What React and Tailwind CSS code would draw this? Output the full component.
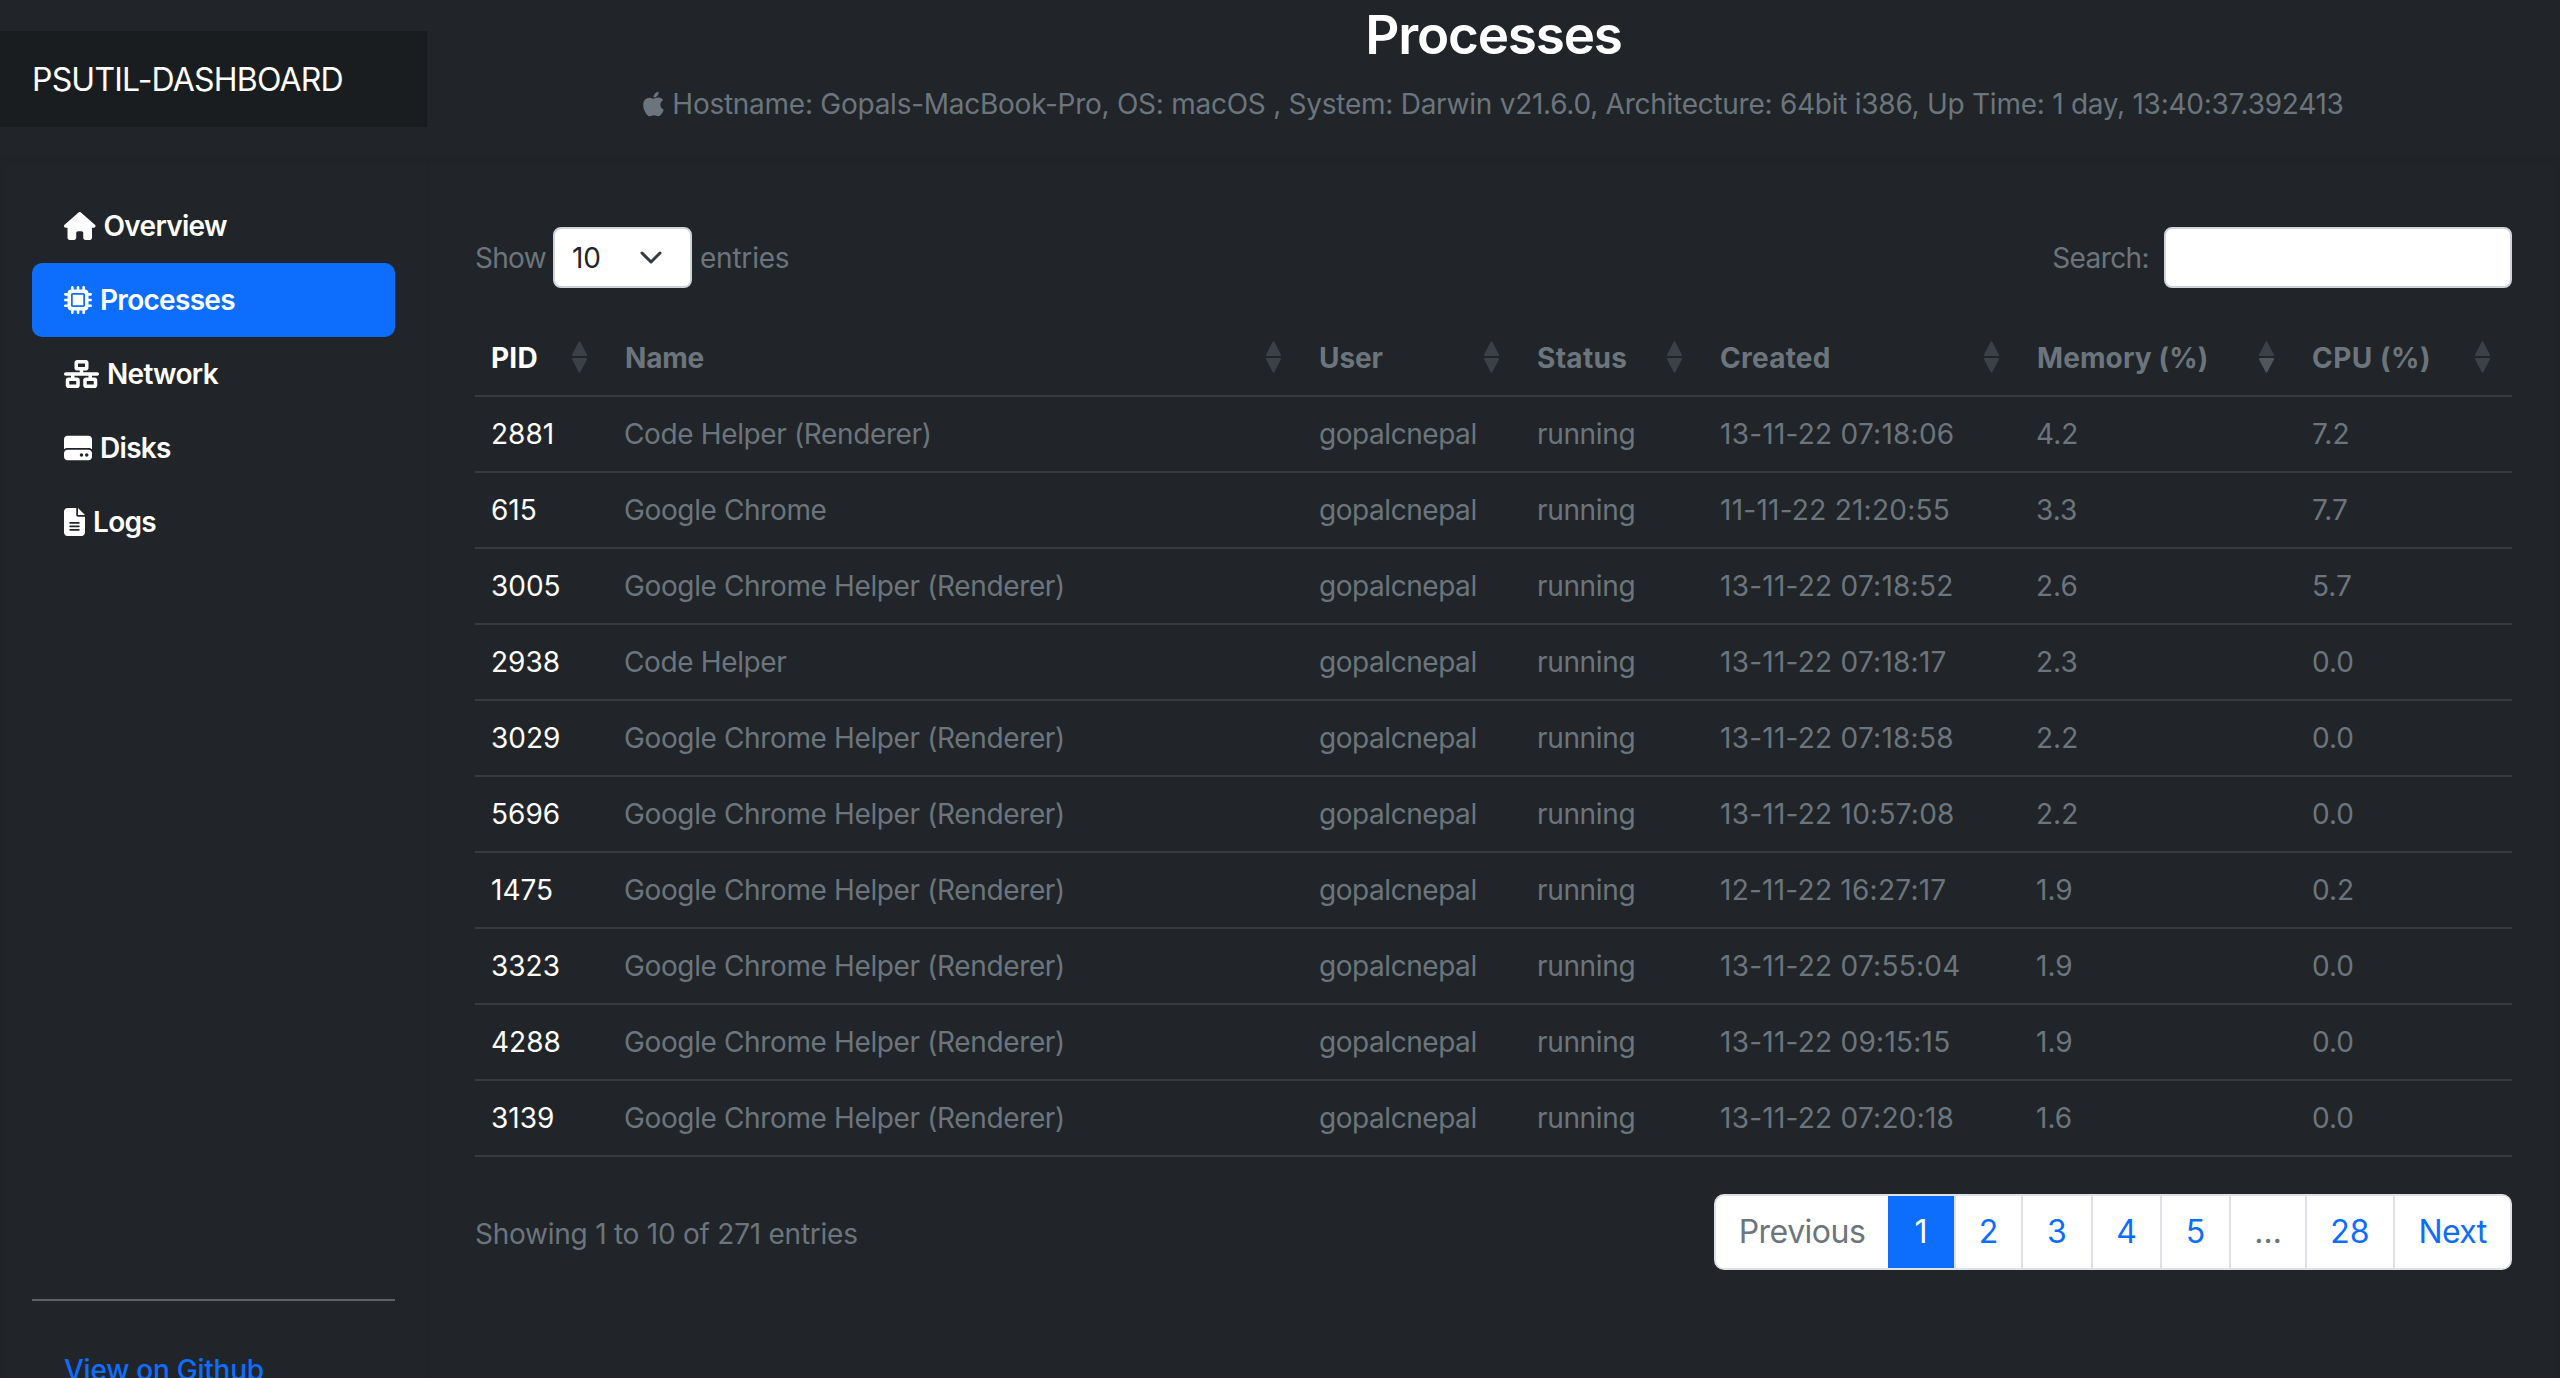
import React from "react";
import { FaHouse, FaMicrochip, FaNetworkWired, FaHardDrive, FaFileLines, FaApple } from "react-icons/fa6";

const rows = [
  ["2881","Code Helper (Renderer)","13-11-22 07:18:06","4.2","7.2"],
  ["615","Google Chrome","11-11-22 21:20:55","3.3","7.7"],
  ["3005","Google Chrome Helper (Renderer)","13-11-22 07:18:52","2.6","5.7"],
  ["2938","Code Helper","13-11-22 07:18:17","2.3","0.0"],
  ["3029","Google Chrome Helper (Renderer)","13-11-22 07:18:58","2.2","0.0"],
  ["5696","Google Chrome Helper (Renderer)","13-11-22 10:57:08","2.2","0.0"],
  ["1475","Google Chrome Helper (Renderer)","12-11-22 16:27:17","1.9","0.2"],
  ["3323","Google Chrome Helper (Renderer)","13-11-22 07:55:04","1.9","0.0"],
  ["4288","Google Chrome Helper (Renderer)","13-11-22 09:15:15","1.9","0.0"],
  ["3139","Google Chrome Helper (Renderer)","13-11-22 07:20:18","1.6","0.0"],
];

const nav = [
  ["Overview", FaHouse, false, "w-[31.5px]"],
  ["Processes", FaMicrochip, true, "w-[28px]"],
  ["Network", FaNetworkWired, false, "w-[35px]"],
  ["Disks", FaHardDrive, false, "w-[28px]"],
  ["Logs", FaFileLines, false, "w-[21px]"],
];

const heads = [
  ["PID","w-[134px] tracking-[0.2px]","text-white",false],
  ["Name","w-[694px] tracking-[-0.2px]","text-[#6c757d]",false],
  ["User","w-[218px] tracking-[-0.1px]","text-[#6c757d]",false],
  ["Status","w-[183px] tracking-[0.3px]","text-[#6c757d]",false],
  ["Created","w-[317px] tracking-[0.25px]","text-[#6c757d]",false],
  ["Memory (%)","w-[275px] tracking-[0.1px]","text-[#6c757d]",true],
  ["CPU (%)","w-[216px] tracking-[0.5px]","text-[#6c757d]",false],
];

function Sort({ down }) {
  return (
    <svg width="15" height="32" viewBox="0 0 15 32" className="absolute right-[22px] top-1/2 -translate-y-1/2">
      <path d="M7.5 1.5 L14 14 H1 Z" fill="#3c4147" stroke="#3c4147" strokeWidth="2" strokeLinejoin="round" />
      <path d="M7.5 30.5 L14 18 H1 Z" fill={down ? "#50565c" : "#3c4147"} stroke={down ? "#50565c" : "#3c4147"} strokeWidth="2" strokeLinejoin="round" />
    </svg>
  );
}

const pages = [
  ["Previous","w-[172px] tracking-[-0.5px]","text-[#6c757d] bg-white"],
  ["1","w-[66px]","text-white bg-[#0d6efd]"],
  ["2","w-[67px]","text-[#0d6efd] bg-white"],
  ["3","w-[70px]","text-[#0d6efd] bg-white"],
  ["4","w-[69px]","text-[#0d6efd] bg-white"],
  ["5","w-[69px]","text-[#0d6efd] bg-white"],
  ["…","w-[76px]","text-[#6c757d] bg-white"],
  ["28","w-[88px]","text-[#0d6efd] bg-white"],
  ["Next","w-[117px] tracking-[-0.6px]","text-[#0d6efd] bg-white"],
];

export default function App() {
  return (
    <div className="h-[1378px] overflow-hidden bg-[#212529] flex flex-col font-['Inter',sans-serif] text-[28px] text-[#6c757d]">
      <header className="h-[157px] shrink-0 flex">
        <div className="w-[427px] shrink-0 pt-[31px]">
          <div className="h-[96px] bg-[#1a1d20] border-r-2 border-[#17191c] flex items-center pl-[32px] pt-[2px] text-[32px] tracking-[-0.8px] text-white">PSUTIL-DASHBOARD</div>
        </div>
        <div className="flex-1 flex flex-col items-center">
          <h1 className="text-[53px] leading-[70px] font-semibold tracking-[-1.2px] text-white">Processes</h1>
          <p className="mt-[15px] leading-[38px] flex items-center gap-[8px] tracking-[-0.26px]"><FaApple className="h-[28px] w-[21px]" />Hostname: Gopals-MacBook-Pro, OS: macOS , System: Darwin v21.6.0, Architecture: 64bit i386, Up Time: 1 day, 13:40:37.392413</p>
        </div>
      </header>
      <div className="flex flex-1 min-h-0 shadow-[inset_0_6px_8px_-6px_rgba(0,0,0,0.12)]">
        <aside className="w-[428px] shrink-0 border-r border-[#1e2226] px-[32px] pt-[32px] flex flex-col">
          <nav className="flex flex-col">
            {nav.map(([label, Icon, active, iw]) => (
              <a key={label} className={`h-[74px] flex items-center gap-[8px] px-[32px] rounded-[10px] font-semibold tracking-[-0.7px] text-white ${active ? "bg-[#0d6efd]" : ""}`}>
                <Icon className={`h-[28px] ${iw} shrink-0`} />
                <span>{label}</span>
              </a>
            ))}
          </nav>
          <div className="mt-[740px] h-[2px] bg-[#5f6264] shrink-0" />
          <a className="mt-[48px] ml-[32px] font-medium tracking-[-0.25px] text-[#0d6efd]">View on Github</a>
        </aside>
        <main className="flex-1 pl-[47px] pr-[48px] pt-[70px]">
          <div className="flex items-center justify-between h-[61px]">
            <div className="flex items-center">
              <span className="tracking-[-0.7px]">Show</span>
              <div className="w-[139px] h-[61px] ml-[7px] mr-[8px] bg-white border-2 border-[#ced4da] rounded-[8px] flex items-center justify-between pl-[17px] pr-[27px] text-[#212529]">
                10
                <svg width="24" height="16" viewBox="0 0 24 16" fill="none" stroke="#343a40" strokeWidth="3" strokeLinecap="round" strokeLinejoin="round"><path d="M3 3l9 9 9-9" /></svg>
              </div>
              <span className="tracking-[-0.2px]">entries</span>
            </div>
            <div className="flex items-center">
              <span className="tracking-[-0.6px]">Search:</span>
              <div className="w-[348px] h-[61px] ml-[15px] bg-white border-2 border-[#ced4da] rounded-[8px]" />
            </div>
          </div>
          <table className="w-full table-fixed mt-[31px] border-collapse">
            <thead>
              <tr className="h-[77px] border-b-2 border-[#373b3e]">
                {heads.map(([h, w, c, down]) => (
                  <th key={h} className={`${w} ${c} relative text-left font-bold pl-[16px] pt-[2px]`}>
                    <span>{h}</span>
                    <Sort down={down} />
                  </th>
                ))}
              </tr>
            </thead>
            <tbody>
              {rows.map((r) => (
                <tr key={r[0] + r[3]} className="h-[76px] border-b-2 border-[#373b3e]">
                  <td className="pl-[16px] text-white">{r[0]}</td>
                  <td className="pl-[15px] tracking-[-0.37px]">{r[1]}</td>
                  <td className="pl-[16px] tracking-[-0.45px]">gopalcnepal</td>
                  <td className="pl-[16px] tracking-[-0.35px]">running</td>
                  <td className="pl-[16px] tracking-[0.25px]">{r[2]}</td>
                  <td className="pl-[15px]">{r[3]}</td>
                  <td className="pl-[16px]">{r[4]}</td>
                </tr>
              ))}
            </tbody>
          </table>
          <div className="flex items-center justify-between mt-[37px]">
            <span className="tracking-[-0.24px] pt-[3px]">Showing 1 to 10 of 271 entries</span>
            <div className="flex h-[76px] rounded-[10px] overflow-hidden border-2 border-[#dee2e6] text-[32px] bg-white">
              {pages.map(([p, w, c], i) => (
                <a key={p} className={`${w} ${c} flex items-center justify-center -my-[2px] ${i > 1 ? "border-l-2 border-[#dee2e6]" : ""}`}>{p}</a>
              ))}
            </div>
          </div>
        </main>
      </div>
    </div>
  );
}
